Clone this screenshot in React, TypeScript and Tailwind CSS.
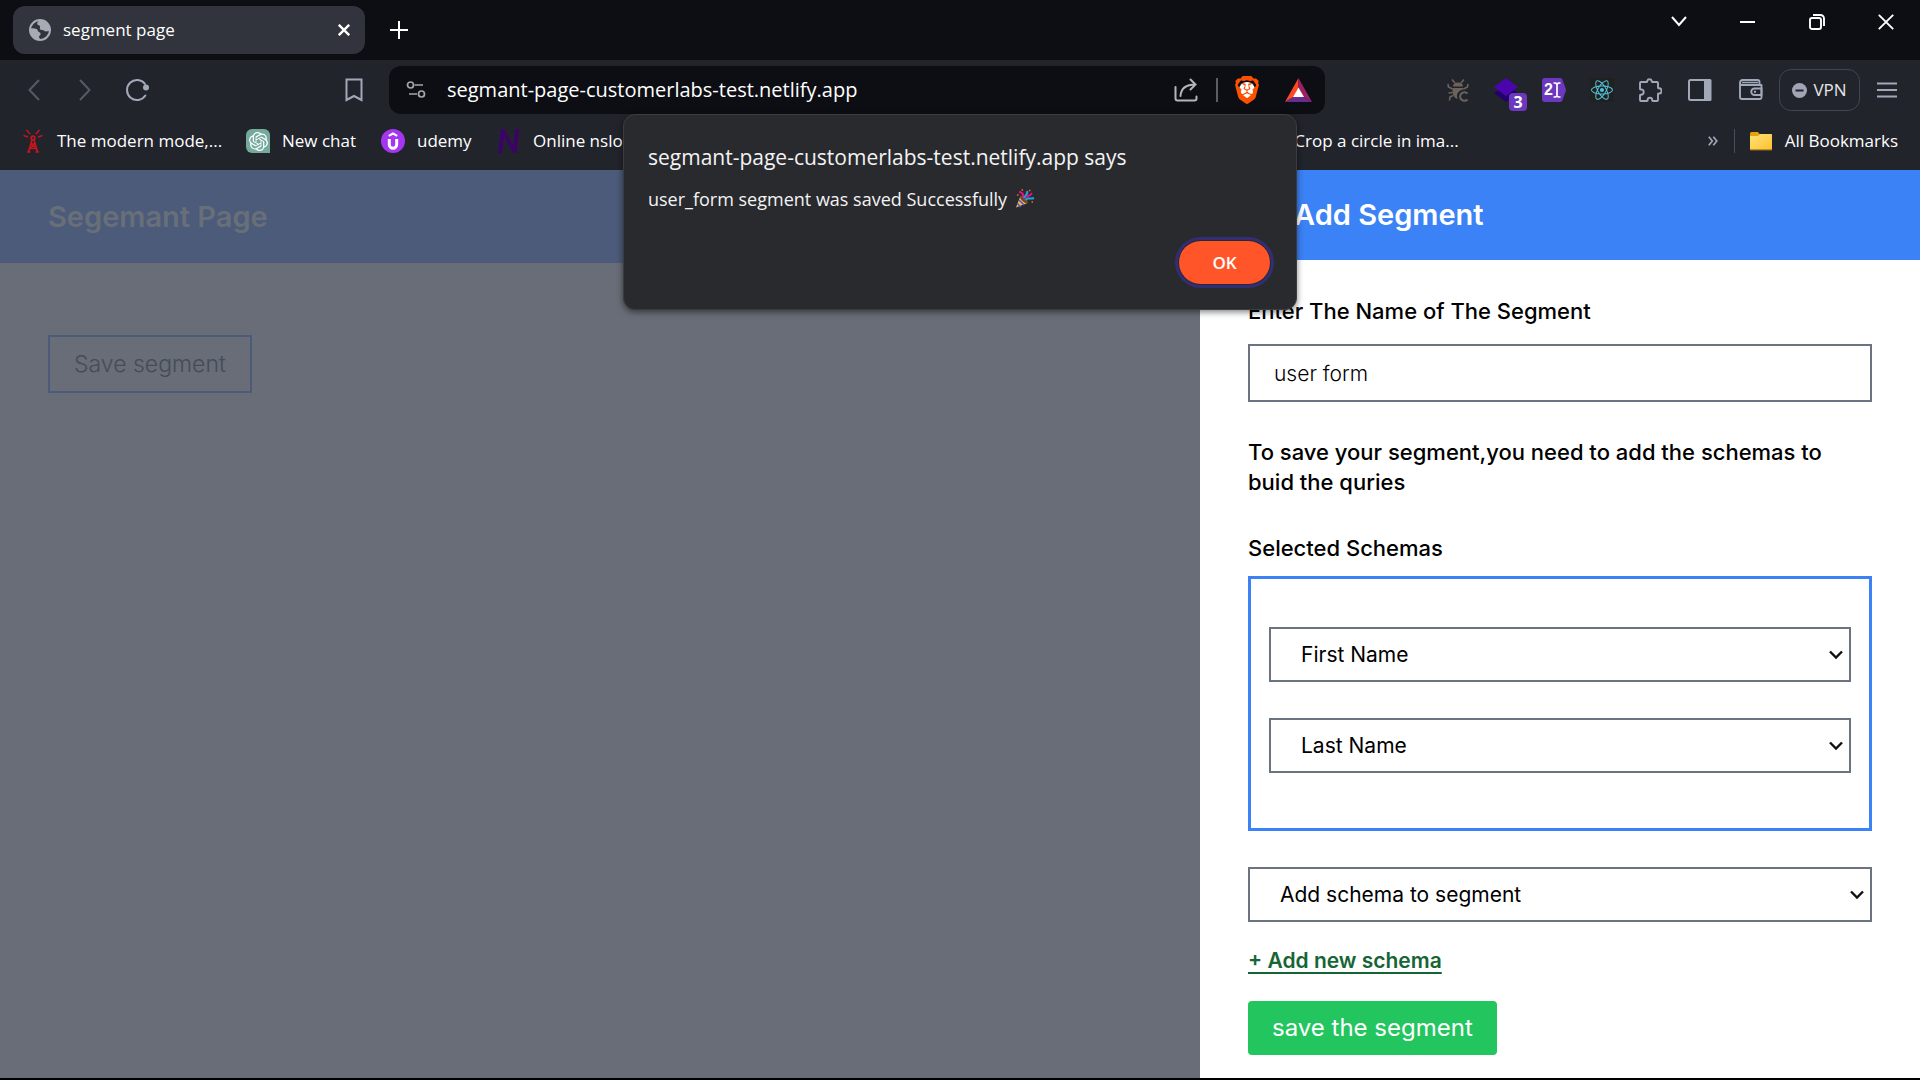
import type { ReactNode } from "react";
import { SiBrave, SiOpenai, SiReact } from "react-icons/si";

const chromeFont = "font-['Open_Sans','Noto_Sans',sans-serif]";
const pageFont = "font-['Inter',sans-serif]";

function GlobeIcon() {
  return (
    <svg width="22" height="22" viewBox="0 0 22 22" aria-hidden="true">
      <circle cx="11" cy="11" r="10" fill="#31343c" stroke="#a6abb5" strokeWidth="2" />
      <path
        d="M10 1.500C9 3 8 3.500 8.200 5c.3 1.500 2.300.8 2.800 2.300.4 1.200-.6 1.900 0 3 .8 1.200 3.300.2 4.300 1.500.7 1 2.500.5 5.200.2C21.500 6 17 .5 10 1.500z"
        fill="#a6abb5"
      />
      <path
        d="M1.500 9.500c2.500-.5 4.500 0 6 .5 1.500.6 1 2.500 2.500 3 1.200.4 2 1.200 1.500 2.500-.4 1-1.500 1.500-1.500 2.500s1 1 1 2.500C5 20.500 1 16 1.500 9.500z"
        fill="#a6abb5"
      />
    </svg>
  );
}

function ReloadIcon() {
  return (
    <svg width="24" height="24" viewBox="0 0 24 24" fill="none" aria-hidden="true">
      <path d="M20.400 17.500A10 10 0 1 1 20 6" stroke="#a1a8b8" strokeWidth="2" strokeLinecap="round" />
      <circle cx="21" cy="9.500" r="3" fill="#a1a8b8" />
    </svg>
  );
}

function TuneIcon() {
  return (
    <svg width="20" height="20" viewBox="0 0 20 20" fill="none" stroke="#a6a7ab" strokeWidth="1.700" aria-hidden="true">
      <circle cx="4.500" cy="5" r="3" />
      <path d="M8.500 5H17M3 14h8" />
      <circle cx="15.500" cy="14" r="3" />
    </svg>
  );
}

function ShareIcon() {
  return (
    <svg width="24" height="24" viewBox="0 0 24 24" fill="none" stroke="#b4b5b8" strokeWidth="2" strokeLinecap="round" aria-hidden="true">
      <path d="M1.500 9v11.500a2 2 0 0 0 2 2h17a2 2 0 0 0 2-2v-2" />
      <path d="M6.500 18C7 10 12 6.500 21.500 6.500M16.500 1.500l5 5-5 5" />
    </svg>
  );
}

function BraveIcon() {
  return (
    <span className="relative flex size-7 items-center justify-center">
      <span className="absolute size-4 rounded-full bg-white" />
      <SiBrave className="relative size-7 text-[#ff5000]" />
    </span>
  );
}

function RewardsIcon() {
  return (
    <svg width="27" height="24" viewBox="0 0 27 24" aria-hidden="true">
      <path d="M13.500 0 0 24l8.500-5 5-9z" fill="#ff4724" />
      <path d="M13.500 0 27 24l-8.500-5-5-9z" fill="#9e1f63" />
      <path d="M0 24h27l-8.500-5h-10z" fill="#662d91" />
      <path d="M13.500 9.500 19 19H8z" fill="#fff" />
    </svg>
  );
}

function TowerIcon() {
  return (
    <svg width="20" height="24" viewBox="0 0 20 24" fill="none" stroke="#c4161f" strokeWidth="1.400" aria-hidden="true">
      <circle cx="10" cy="9" r="1.800" strokeWidth="1.800" />
      <path d="M9 11 5.500 23M11 11l3.500 12" strokeWidth="1.700" />
      <path d="M8 15h4M7.500 15l6 4.500M12.500 15l-6 4.500M6.500 19.500h7M4 23h3.500M12.500 23H16" />
      <path d="M7 5 3.500 1M13 5l3.500-4M5 8 .5 6.500M15 8l4.500-1.500" />
    </svg>
  );
}

function ChatIcon() {
  return (
    <span className="flex size-6 items-center justify-center rounded-md rounded-br-none bg-[#74aa9c]">
      <SiOpenai className="size-[19px] text-white" />
    </span>
  );
}

function UdemyIcon() {
  return (
    <svg width="24" height="24" viewBox="0 0 24 24" fill="none" stroke="#fff" aria-hidden="true">
      <circle cx="12" cy="12" r="12" fill="#a435f0" stroke="none" />
      <path d="M7.800 6.800 12 4.500l4.200 2.300" strokeWidth="2" />
      <path d="M8.300 10v5.500a3.700 3.700 0 0 0 7.400 0V10" strokeWidth="3" />
    </svg>
  );
}

function FolderIcon() {
  return (
    <svg width="24" height="20" viewBox="0 0 24 20" aria-hidden="true">
      <defs>
        <linearGradient id="folder" x1="0" y1="0" x2="1" y2="1">
          <stop offset="0" stopColor="#ffe17a" />
          <stop offset="1" stopColor="#fcc22f" />
        </linearGradient>
      </defs>
      <path d="M1 2.500A1.500 1.500 0 0 1 2.500 1H9l1.500 2H22a1 1 0 0 1 1 1v14H1z" fill="#e8a30c" />
      <path d="M1 5h8l2-2h11a1 1 0 0 1 1 1v13.500a1 1 0 0 1-1 1H2a1 1 0 0 1-1-1z" fill="url(#folder)" />
      <path d="M1 18.800h22" stroke="#d99a1b" />
    </svg>
  );
}

function BugIcon() {
  return (
    <svg width="22" height="24" viewBox="0 0 22 24" fill="none" stroke="#6b635b" strokeWidth="1.600" aria-hidden="true">
      <path d="M6 8.500c0-2.500 2-4 5-4s5 1.500 5 4z" fill="#6b635b" stroke="none" />
      <path d="M5.500 10h11v1.500c-3.500.5-6.500 3-6.500 6.500l.5 3C7.500 20 5.500 17 5.500 14z" fill="#6b635b" stroke="none" />
      <path d="M8 5 5 1.500M14 5l3-3.500M5.500 11 1.500 9 1 6M16.500 11l4-2 .5-3M5.500 14.500 1.500 15M6 17.500 3 19l-.5 3.500" />
      <path d="M20.500 15.500a4.300 4.300 0 1 0 0 6" strokeWidth="2" />
    </svg>
  );
}

function LayersIcon() {
  return (
    <span className="relative block size-6">
      <svg width="24" height="24" viewBox="0 0 24 24" aria-hidden="true">
        <path d="M0 15 12 8l12 7-12 9z" fill="#23006e" />
        <path d="M12 0 24 9 12 18 0 9z" fill="#4b05ad" />
      </svg>
      <span className="absolute top-[15px] left-[15px] flex size-[18px] items-center justify-center rounded-sm bg-[#6b38be] text-base leading-none font-bold text-white">
        3
      </span>
    </span>
  );
}

function CursorTagIcon() {
  return (
    <span className="relative flex size-6 items-center">
      <svg className="absolute inset-0" width="24" height="24" viewBox="0 0 24 24" fill="none" aria-hidden="true">
        <path d="M3 0h15q1.500 0 2.200 1.300l3.300 8.700q.8 2 0 4l-3.300 8.700Q19.500 24 18 24H3q-3 0-3-3V3q0-3 3-3z" fill="#6b38be" />
        <path d="M11.500 5h2l1.500 1 1.500-1h2M11.500 19h2l1.500-1 1.500 1h2M15 6v12" stroke="#fff" strokeWidth="1.700" />
      </svg>
      <span className="relative pl-0.5 font-['Liberation_Sans',sans-serif] text-base leading-none font-bold text-white">2</span>
    </span>
  );
}

function PuzzleIcon() {
  return (
    <svg width="24" height="24" viewBox="0 0 24 24" fill="none" stroke="#a1a8b8" strokeWidth="1.900" strokeLinejoin="round" aria-hidden="true">
      <path d="M3 4h5.500c.7 0 .8-.5.7-1a2.400 2.400 0 0 1 4.600 0c-.1.500 0 1 .7 1H19a1 1 0 0 1 1 1v4.500c0 .7.500.9 1 .8a2.600 2.600 0 0 1 0 5.200c-.5-.1-1 .1-1 .8V22a1 1 0 0 1-1 1h-4c-.7 0-.9-.4-.8-1a2.300 2.300 0 0 0-4.600 0c.1.600-.1 1-.8 1H3a1 1 0 0 1-1-1v-4.500c0-.7.500-.8 1-.7a2.700 2.700 0 0 0 0-5.400c-.5.100-1 0-1-.7V5a1 1 0 0 1 1-1z" />
    </svg>
  );
}

function SidebarIcon() {
  return (
    <svg width="24" height="22" viewBox="0 0 24 22" aria-hidden="true">
      <rect x="1" y="1" width="21" height="20" rx="1.500" fill="none" stroke="#a1a8b8" strokeWidth="2" />
      <path d="M16 0h6q1.500 0 1.500 1.500v19q0 1.500-1.500 1.500h-6z" fill="#a1a8b8" />
    </svg>
  );
}

function WalletIcon() {
  return (
    <svg width="24" height="22" viewBox="0 0 24 22" fill="none" stroke="#a1a8b8" strokeWidth="1.900" strokeLinejoin="round" aria-hidden="true">
      <path d="M1 3v15a2 2 0 0 0 2 2h18a1.500 1.500 0 0 0 1.500-1.500V6H3a2 2 0 0 1-2-2 3 3 0 0 1 2-3h15.500a2 2 0 0 1 2 2v3" />
      <path d="M3 3.500h16" strokeWidth="1.500" />
      <path d="M22.500 9.500h-7a3 3 0 0 0 0 6.500h7z" />
      <path d="M15 12.800h2" />
    </svg>
  );
}

function PartyIcon() {
  return (
    <svg width="20" height="20" viewBox="0 0 20 20" fill="none" role="img" aria-label="party popper">
      <path d="M1 18.500 5.500 7l7 7z" fill="#f5c443" />
      <path d="m4 11 5 5M2.500 14.500 5.500 18" stroke="#5a4fd0" strokeWidth="1.700" />
      <ellipse cx="9" cy="10.500" rx="2.200" ry="5" transform="rotate(-45 9 10.500)" fill="#6b4a2c" />
      <path d="M4 3c4 0 4 2.500 5 6.500" stroke="#e3118a" strokeWidth="2.200" />
      <path d="M9.500 9c0-3 4-3 2.500-7" stroke="#1f9fd8" strokeWidth="2.200" />
      <path d="M10.500 11c2-3 5-.5 8.500-2" stroke="#1f9fd8" strokeWidth="2.200" />
      <path d="M11 8c2-2 4-.5 6-4" stroke="#e3118a" strokeWidth="1.900" />
      <path d="M6.500 1h1.600M14 1.500h1.500M16.500 13h1.500M2 6h1.500" stroke="#f26b2c" strokeWidth="1.500" />
    </svg>
  );
}

function IconButton({ label, className, children }: { label: string; className: string; children: ReactNode }) {
  return (
    <button type="button" aria-label={label} className={`flex shrink-0 items-center justify-center ${className}`}>
      {children}
    </button>
  );
}

function TabStrip() {
  return (
    <header className="flex h-[60px] items-start bg-[#0d0e13] text-white">
      <div className="mt-1.5 ml-[13px] flex h-12 w-[352px] items-center rounded-xl bg-[#31343c] pr-[9px] pl-4">
        <GlobeIcon />
        <span className="ml-3 flex-1 text-[17px]">segment page</span>
        <IconButton label="Close tab" className="size-6">
          <svg width="12" height="12" viewBox="0 0 12 12" stroke="#fff" strokeWidth="2.400" aria-hidden="true">
            <path d="m.8.8 10.400 10.400M11.200.8.8 11.200" />
          </svg>
        </IconButton>
      </div>
      <IconButton label="New tab" className="mt-1.5 ml-[10px] size-12">
        <svg width="18" height="18" viewBox="0 0 18 18" stroke="#fff" strokeWidth="2" aria-hidden="true">
          <path d="M9 0v18M0 9h18" />
        </svg>
      </IconButton>
      <div className="ml-auto flex">
        <IconButton label="Search tabs" className="h-[43px] w-[69px]">
          <svg width="16" height="11" viewBox="0 0 16 11" fill="none" stroke="#fff" strokeWidth="2" aria-hidden="true">
            <path d="m1 1 7 8 7-8" />
          </svg>
        </IconButton>
        <IconButton label="Minimize" className="h-[43px] w-[69px]">
          <svg width="15" height="2" viewBox="0 0 15 2" aria-hidden="true">
            <path d="M0 0h15v2H0z" fill="#fff" />
          </svg>
        </IconButton>
        <IconButton label="Restore" className="h-[43px] w-[69px]">
          <svg width="16" height="16" viewBox="0 0 16 16" fill="none" stroke="#fff" strokeWidth="1.900" aria-hidden="true">
            <rect x="1" y="4" width="11" height="11" rx="2" />
            <path d="M4 1h7.500A3.500 3.500 0 0 1 15 4.500V12" />
          </svg>
        </IconButton>
        <IconButton label="Close" className="h-[43px] w-[69px]">
          <svg width="16" height="16" viewBox="0 0 16 16" stroke="#fff" strokeWidth="1.900" aria-hidden="true">
            <path d="m.8.8 14.400 14.400M15.200.8.8 15.200" />
          </svg>
        </IconButton>
      </div>
    </header>
  );
}

function Toolbar() {
  return (
    <div className="flex items-center pt-1.5">
      <div className="flex w-[389px] shrink-0 items-center pl-[10px]">
        <IconButton label="Back" className="size-12">
          <svg width="12" height="22" viewBox="0 0 12 22" fill="none" stroke="#565a65" strokeWidth="2" aria-hidden="true">
            <path d="M11 1 1.500 11 11 21" />
          </svg>
        </IconButton>
        <IconButton label="Forward" className="h-12 w-[53px]">
          <svg width="12" height="22" viewBox="0 0 12 22" fill="none" stroke="#565a65" strokeWidth="2" aria-hidden="true">
            <path d="m1 1 9.500 10L1 21" />
          </svg>
        </IconButton>
        <IconButton label="Reload" className="h-12 w-[51px]">
          <ReloadIcon />
        </IconButton>
        <IconButton label="Bookmark this page" className="mr-[11px] ml-auto size-12">
          <svg width="18" height="24" viewBox="0 0 18 24" fill="none" stroke="#a1a8b8" strokeWidth="2" aria-hidden="true">
            <path d="M1.500 1.500h15v20.500L9 18l-7.500 4z" />
          </svg>
        </IconButton>
      </div>
      <div className="flex h-12 min-w-0 flex-1 items-center rounded-xl bg-[#0d0e13] pr-[13px] pl-[17px]">
        <TuneIcon />
        <input
          aria-label="Address"
          readOnly
          value="segmant-page-customerlabs-test.netlify.app"
          className="ml-[21px] min-w-0 flex-1 bg-transparent text-xl text-white outline-none"
        />
        <IconButton label="Share" className="size-6">
          <ShareIcon />
        </IconButton>
        <span className="mr-[15px] ml-[18px] h-6 w-0.5 bg-[#5b5d62]" />
        <IconButton label="Shields" className="size-7">
          <BraveIcon />
        </IconButton>
        <IconButton label="Rewards" className="ml-[23px] h-7 w-7">
          <RewardsIcon />
        </IconButton>
      </div>
      <div className="flex w-[595px] shrink-0 items-center justify-end pr-[9px]">
        <IconButton label="Debugger" className="size-12">
          <BugIcon />
        </IconButton>
        <IconButton label="Layers" className="size-12">
          <LayersIcon />
        </IconButton>
        <IconButton label="Text cursor" className="size-12">
          <CursorTagIcon />
        </IconButton>
        <IconButton label="React tools" className="size-12">
          <span className="flex size-6 items-center justify-center bg-[#20201f]">
            <SiReact className="size-[22px] text-[#53c1de]" />
          </span>
        </IconButton>
        <IconButton label="Extensions" className="size-12">
          <PuzzleIcon />
        </IconButton>
        <IconButton label="Sidebar" className="h-12 w-[51px]">
          <SidebarIcon />
        </IconButton>
        <IconButton label="Wallet" className="h-12 w-[51px]">
          <WalletIcon />
        </IconButton>
        <button
          type="button"
          className="mr-[3px] ml-[3px] flex h-[42px] w-[81px] items-center justify-center gap-[6px] rounded-xl border border-[#41454f] text-[17px] text-[#e6e7ea]"
        >
          <svg width="15" height="15" viewBox="0 0 15 15" aria-hidden="true">
            <circle cx="7.500" cy="7.500" r="7.500" fill="#a1a4b5" />
            <path d="M3.500 7.500h8" stroke="#22242c" strokeWidth="2" />
          </svg>
          VPN
        </button>
        <IconButton label="Menu" className="size-12">
          <svg width="20" height="16" viewBox="0 0 20 16" stroke="#a1a8b8" strokeWidth="2" aria-hidden="true">
            <path d="M0 1.500h20M0 8h20M0 14.500h20" />
          </svg>
        </IconButton>
      </div>
    </div>
  );
}

function BookmarkLink({ icon, className, children }: { icon?: ReactNode; className: string; children: ReactNode }) {
  return (
    <a href="#" className={`flex shrink-0 items-center whitespace-nowrap ${className}`}>
      {icon}
      {children}
    </a>
  );
}

function BookmarksBar() {
  return (
    <nav className="flex h-14 items-center pr-[22px] pb-0.5 pl-[23px] text-[17px] text-white">
      <BookmarkLink icon={<TowerIcon />} className="w-[223px] gap-[14px]">
        The modern mode,...
      </BookmarkLink>
      <BookmarkLink icon={<ChatIcon />} className="w-[135px] gap-3">
        New chat
      </BookmarkLink>
      <BookmarkLink icon={<UdemyIcon />} className="w-[116px] gap-3">
        udemy
      </BookmarkLink>
      <BookmarkLink
        icon={
          <span className="w-6 font-['Lato',sans-serif] text-[32px] leading-6 font-black text-[#3c0366] italic">N</span>
        }
        className="gap-3"
      >
        Online nslookup
      </BookmarkLink>
      <BookmarkLink className="mr-[249px] ml-auto">Crop a circle in ima...</BookmarkLink>
      <button type="button" aria-label="More bookmarks" className="flex h-6 shrink-0 items-center">
        <svg width="10" height="10" viewBox="0 0 10 10" fill="none" stroke="#a1a8b8" strokeWidth="1.700" aria-hidden="true">
          <path d="m.8.8 3.500 4.200L.8 9.200M5.300.8 8.800 5 5.300 9.200" />
        </svg>
      </button>
      <span className="mr-[14px] ml-4 h-6 w-px bg-[#4a4e58]" />
      <BookmarkLink icon={<FolderIcon />} className="gap-3">
        All Bookmarks
      </BookmarkLink>
    </nav>
  );
}

function AlertDialog() {
  return (
    <div
      role="alertdialog"
      aria-labelledby="alert-title"
      aria-describedby="alert-message"
      className={`absolute top-[114px] left-1/2 z-10 flex w-[674px] -translate-x-1/2 flex-col rounded-xl border border-[#3c3d41] bg-[#292a2e] px-6 pt-[26px] pb-[25px] text-[#f3f3f4] shadow-[0_2px_6px_rgba(0,0,0,0.5)] ${chromeFont}`}
    >
      <h2 id="alert-title" className="text-[21px] leading-8">
        segmant-page-customerlabs-test.netlify.app says
      </h2>
      <p id="alert-message" className="mt-3 flex items-center gap-2 text-lg leading-7">
        user_form segment was saved Successfully
        <PartyIcon />
      </p>
      <button
        type="button"
        className="mt-7 mr-[2px] h-[43px] w-[91px] self-end rounded-full bg-[#ff5529] text-[17px] font-semibold text-white shadow-[0_0_0_1px_#292a2e,0_0_0_4px_#322d75]"
      >
        OK
      </button>
    </div>
  );
}

function SchemaSelect({ label, options }: { label: string; options: string[] }) {
  return (
    <div className="relative">
      <select
        aria-label={label}
        className="block h-[55px] w-full appearance-none border-2 border-[#6b7280] bg-white px-[30px] text-[21px] text-black"
      >
        {options.map((option) => (
          <option key={option}>{option}</option>
        ))}
      </select>
      <svg
        className="pointer-events-none absolute top-[23px] right-2"
        width="14"
        height="10"
        viewBox="0 0 14 10"
        fill="none"
        stroke="#111"
        strokeWidth="2.400"
        aria-hidden="true"
      >
        <path d="m1 1.500 6 6 6-6" />
      </svg>
    </div>
  );
}

function SegmentPanel() {
  return (
    <aside className="w-[37.5%] bg-white text-black">
      <div className="flex h-[90px] items-center bg-[#3b82f6] pl-[94px]">
        <h2 className="text-[29px] font-semibold text-white">Add Segment</h2>
      </div>
      <form className="flex flex-col items-start px-12 pt-9 pb-[23px] text-[22px] leading-[30px] font-medium">
        <label htmlFor="segment-name">Enter The Name of The Segment</label>
        <input
          id="segment-name"
          defaultValue="user form"
          className="mt-[18px] h-[58px] w-full border-2 border-[#6b7280] px-6 text-[21px] font-light text-black outline-none"
        />
        <p className="mt-[35px]">To save your segment,you need to add the schemas to buid the quries</p>
        <h3 className="mt-9">Selected Schemas</h3>
        <div className="mt-[13px] flex w-full flex-col gap-9 border-3 border-[#3b82f6] px-[18px] pt-12 pb-[55px] font-normal">
          <SchemaSelect label="First schema" options={["First Name"]} />
          <SchemaSelect label="Second schema" options={["Last Name"]} />
        </div>
        <div className="mt-9 w-full font-normal">
          <SchemaSelect label="New schema" options={["Add schema to segment"]} />
        </div>
        <a href="#" className="mt-6 text-[21px] font-semibold text-[#166534] underline decoration-2 underline-offset-4">
          + Add new schema
        </a>
        <button type="button" className="mt-[25px] h-[54px] rounded-sm bg-[#22c55e] px-6 text-2xl font-normal text-white">
          save the segment
        </button>
      </form>
    </aside>
  );
}

export default function App() {
  return (
    <div className="relative flex min-h-screen flex-col border-b-2 border-black bg-[#22242c]">
      <div className={chromeFont}>
        <TabStrip />
        <Toolbar />
        <BookmarksBar />
      </div>
      <div className={`flex flex-1 ${pageFont}`}>
        <main className="flex-1 bg-[#686d77]">
          <div className="flex h-[93px] items-center bg-[#4b5b79] px-12">
            <h1 className="text-[29px] font-semibold text-[#686f79]">Segemant Page</h1>
          </div>
          <button
            type="button"
            className="mt-[72px] ml-12 h-[58px] border-2 border-[#4b5b79] px-6 text-[23px] font-light text-[#454c57]"
          >
            Save segment
          </button>
        </main>
        <SegmentPanel />
      </div>
      <AlertDialog />
    </div>
  );
}
